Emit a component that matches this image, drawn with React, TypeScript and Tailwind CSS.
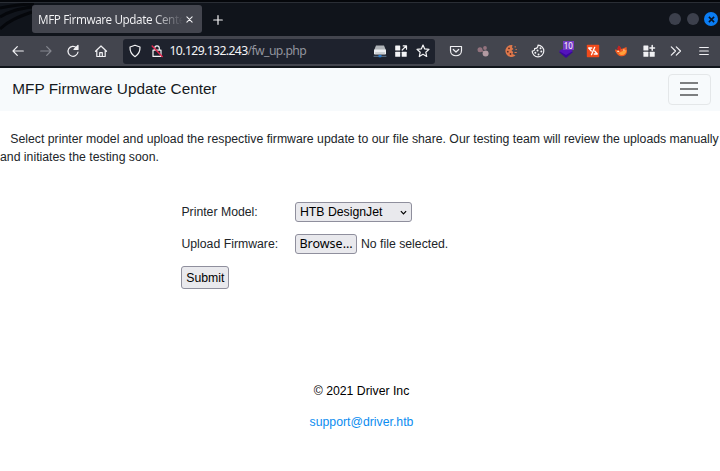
import React from "react";

const stroke = {
  fill: "none",
  stroke: "currentColor",
  strokeWidth: 1.2,
  strokeLinecap: "round" as const,
  strokeLinejoin: "round" as const,
};

function Icon({ children, className = "" }: { children: React.ReactNode; className?: string }) {
  return (
    <svg viewBox="0 0 14 14" className={"size-[14px] shrink-0 " + className} {...stroke}>
      {children}
    </svg>
  );
}

function TitleBar() {
  return (
    <header className="relative flex h-9 items-start overflow-hidden border-t-2 border-[#05070b] bg-[#10141b] pl-8">
      <svg className="absolute left-0 top-0 h-[34px] w-[120px]" viewBox="0 0 120 34" fill="none" stroke="#05070b" strokeWidth="3">
        <path d="M0 15C10 9 18 7 32 5M0 27C8 19 18 15 32 10M0 6C10 4 20 2 34 2" />
      </svg>
      <div className="absolute left-0 top-0 h-px w-full bg-[#2a2e35]" />
      <div className="relative mt-[3px] flex h-7 w-[170px] items-center rounded-[3px] bg-[#43454e] pl-1.5 text-[#f4f4f6]">
        <div className="w-[145px] whitespace-nowrap bg-linear-to-r from-[#f4f4f6] from-80% to-[#43454e] bg-clip-text font-['Noto_Sans',sans-serif] text-[11.7px] leading-[16px] tracking-[-0.4px] text-transparent">
          MFP Firmware Update Cente
        </div>
        <svg viewBox="0 0 8 8" className="ml-[3px] size-[7px]" {...stroke}>
          <path d="M1 1l6 6M7 1L1 7" />
        </svg>
      </div>
      <svg viewBox="0 0 10 10" className="ml-[11px] mt-[13px] size-[10px] text-[#f4f4f6]" {...stroke}>
        <path d="M5 .7v8.6M.7 5h8.6" />
      </svg>
      <div className="ml-auto mr-[2px] mt-[11px] flex gap-[6px]">
        <span className="size-3 rounded-full bg-[#3c404c]" />
        <span className="size-3 rounded-full bg-[#3c404c]" />
        <span className="-ml-px -mt-px flex size-[14px] items-center justify-center rounded-full bg-[#0a7df4]">
          <svg viewBox="0 0 8 8" className="size-[7px]" stroke="#071426" strokeWidth="1.8">
            <path d="M1 1l6 6M7 1L1 7" />
          </svg>
        </span>
      </div>
    </header>
  );
}

function AddressBar() {
  return (
    <div className="ml-[15px] flex h-[25px] w-[312px] items-center rounded-[3px] bg-[#1e222d] pl-[5px] text-[#f4f4f6]">
      <Icon>
        <path d="M7 1.200l5 1.800c.2 4.300-1 7.200-5 9.700C3 10.200 1.800 7.300 2 3z" />
      </Icon>
      <Icon className="ml-[8px]">
        <path d="M4.700 6V4.200c0-3.200 4.600-3.200 4.600 0V6M3 6.200h8v6.200H3z" />
        <path d="M2.200 2l10 10.500" stroke="#e22850" strokeWidth="1.500" />
      </Icon>
      <span className="ml-[6px] font-['Noto_Sans',sans-serif] text-[12.2px] leading-4 tracking-[-0.6px]">
        10.129.132.243<span className="text-[#92949d]">/fw_up.php</span>
      </span>
      <div className="ml-auto mr-[5px] flex items-center gap-[7.500px]">
        <Icon>
          <path d="M3 1.500h8l2 5H1z" fill="#aeb2b6" stroke="none" />
          <rect x="1" y="5.500" width="12" height="5" rx=".7" fill="#eceef0" stroke="none" />
          <path d="M2.500 9h9" stroke="#9aa0a5" strokeWidth=".8" />
          <path d="M1 12.300h12M7 11v2" stroke="#68829a" strokeWidth=".9" />
          <rect x="5.500" y="11" width="3" height="2.200" fill="#2a79c9" stroke="none" />
        </Icon>
        <Icon>
          <g fill="currentColor" stroke="none">
            <rect x="1.200" y="1.500" width="5" height="5" rx=".5" />
            <rect x="1.200" y="7.700" width="5" height="5" rx=".5" />
            <rect x="7.700" y="7.700" width="5" height="5" rx=".5" />
          </g>
          <path d="M8.200 6l3.800-3.800M9.200 1.900h3.300v3.300" />
        </Icon>
        <Icon>
          <path d="M7 1l1.700 3.900 4.300.4-3.200 2.900.9 4.300L7 10.300l-3.700 2.200.9-4.300L1 5.300l4.300-.4z" />
        </Icon>
      </div>
    </div>
  );
}

function Toolbar() {
  return (
    <div className="flex h-[30px] items-center bg-[#43454e] pl-[11px] text-[#f1f1f4]">
      <div className="flex items-center gap-[13.500px]">
        <Icon>
          <path d="M12.300 7H2M6.300 2.700L2 7l4.300 4.300" />
        </Icon>
        <Icon className="text-[#85878f]">
          <path d="M1.700 7H12M7.700 2.700L12 7l-4.300 4.300" />
        </Icon>
        <Icon>
          <path d="M10.500 3.700A5 5 0 1 0 12 8" />
          <path d="M12 1.500v4H8z" fill="currentColor" />
        </Icon>
        <Icon>
          <path d="M1.500 7.300L7 2l5.500 5.300M2.800 6.500v6h8.400v-6M5.700 12.300V8.700h2.600v3.600" />
        </Icon>
      </div>
      <AddressBar />
      <div className="ml-[14px] flex items-center gap-[13.600px]">
        <Icon>
          <path d="M1.500 2.500h11v4c0 7-11 7-11 0zM4.300 5.500L7 8l2.700-2.500" />
        </Icon>
        <Icon>
          <g stroke="none" fill="#93737e">
            <circle cx="4" cy="5.800" r="2.500" />
            <circle cx="9" cy="4" r="1.900" />
            <path d="M4 5l5 4" stroke="#93737e" strokeWidth="1.500" />
            <circle cx="9.600" cy="9.400" r="3" fill="#b29aa2" />
          </g>
        </Icon>
        <Icon>
          <path d="M8.500 1A6 6 0 1 0 11.500 11.300L8.500 10l.7-2L7.500 6.500 9.500 5 8 3.500z" fill="#df784b" stroke="none" />
          <g fill="#592e26" stroke="none">
            <circle cx="5" cy="4.300" r=".9" />
            <circle cx="3.800" cy="7.700" r=".9" />
            <circle cx="6.500" cy="10" r=".9" />
          </g>
          <path d="M11 2.800h.4M12 5.500h.3M11 8.500h1.300" stroke="#df784b" />
        </Icon>
        <Icon>
          <path d="M7 1.200A5.800 5.800 0 1 1 1.200 7C3 7.200 4 6 3.600 4.500 6 4.500 7 3 7 1.200z" />
          <path d="M9.500 4.200h.1M6.500 6.500h.1M10.300 7.500h.1M4.300 8.800h.1M7.500 10.500h.1" strokeWidth="1.900" />
        </Icon>
        <div className="relative size-[14px]">
          <Icon>
            <path d="M0 8l7-4 7 4-7 6z" fill="#3a089b" stroke="none" />
            <path d="M0 7l7-4 7 4-7 4z" fill="#5413bd" stroke="none" />
          </Icon>
          <span className="absolute -top-[3px] left-[4px] flex h-[9px] w-[11px] items-center justify-center bg-[#743bc3] font-['Noto_Sans',sans-serif] text-[8px] leading-none text-white">
            10
          </span>
        </div>
        <Icon>
          <rect x=".8" y=".8" width="12.400" height="12.400" rx=".7" fill="#f04a1b" stroke="none" />
          <path d="M5.800 4H2.700l2.600 3M8.700 3.300l-3.200 7.400M8.700 7l2.600 3H8.200" stroke="white" strokeWidth="1.300" />
        </Icon>
        <Icon>
          <path d="M1 5.500l3 .5 1-4 2.500 3L12.500 3l.5 5c-1 6-10 6-12-2z" fill="#ee5b22" stroke="none" />
          <path d="M4.500 1.500L7 3.500 6 7 3 5z" fill="#c52322" stroke="none" />
          <path d="M4 8.500c2 1 4-2 8.500-2.500-.5 6-6 6.500-8.500 2.500z" fill="#ffa03a" stroke="none" />
          <path d="M3.700 7.300h1M9.500 6h.7" stroke="#ffe2c4" />
        </Icon>
        <Icon>
          <g fill="currentColor" stroke="none">
            <rect x="1.400" y="1.400" width="5" height="5" rx=".5" />
            <rect x="1.400" y="7.700" width="5" height="5" rx=".5" />
            <rect x="7.700" y="7.700" width="5" height="5" rx=".5" />
          </g>
          <path d="M10.200 1.600v4.600M7.900 3.900h4.600" strokeWidth="1.500" />
        </Icon>
        <Icon>
          <path d="M2.300 2.800L6.500 7l-4.200 4.200M7.300 2.800L11.500 7l-4.200 4.200" />
        </Icon>
        <Icon>
          <path d="M2.700 3.500h8.600M2.700 7h8.600M2.700 10.500h8.600" />
        </Icon>
      </div>
    </div>
  );
}

export default function App() {
  return (
    <div className="h-[471px] w-[720px] overflow-hidden bg-white font-['Liberation_Sans',Arial,sans-serif] text-[12.280px] leading-[18.400px] text-[#212529]">
      <TitleBar />
      <Toolbar />
      <div className="h-[1.500px] bg-[#11151b]" />
      <nav className="flex h-[43px] items-center justify-between bg-[#f7fafc] pl-[12.300px] pr-[9.500px]">
        <span className="text-[15.350px] text-[#15191c]">MFP Firmware Update Center</span>
        <button className="flex h-[31px] w-[43px] flex-col items-center justify-center gap-[4.500px] rounded-[4px] border border-[#e4e7e9]">
          <span className="h-[1.500px] w-[18px] bg-[#7c7e80]" />
          <span className="h-[1.500px] w-[18px] bg-[#7c7e80]" />
          <span className="h-[1.500px] w-[18px] bg-[#7c7e80]" />
        </button>
      </nav>
      <main>
        <p className="mt-[19px] whitespace-nowrap indent-[10.300px]">
          Select printer model and upload the respective firmware update to our file share. Our testing team will review the uploads manually
        </p>
        <p>and initiates the testing soon.</p>
        <form className="ml-[181.400px] mt-[36px] grid grid-cols-[113.600px_1fr] items-center gap-y-3">
          <label>Printer Model:</label>
          <div className="flex h-5 w-[117px] items-center justify-between rounded-[3px] border border-[#8f8f9d] bg-[#e9e9ed] pl-[4px] pr-[4px] text-black">
            HTB DesignJet
            <svg viewBox="0 0 8 8" className="size-[7px]" fill="none" stroke="black" strokeWidth="1.400">
              <path d="M1 2.500l3 3 3-3" />
            </svg>
          </div>
          <label>Upload Firmware:</label>
          <div className="flex items-center">
            <button type="button" className="h-5 w-[62px] rounded-[3px] border border-[#8f8f9d] bg-[#e9e9ed] text-center font-['Noto_Sans',sans-serif] text-[12.500px] leading-[18px] text-black">
              Browse…
            </button>
            <span className="ml-[4px]">No file selected.</span>
          </div>
          <button type="button" className="h-[23px] w-12 rounded-[3px] border border-[#8f8f9d] bg-[#e9e9ed] leading-[20px] text-black">
            Submit
          </button>
        </form>
      </main>
      <footer className="mt-[93px] flex flex-col items-center gap-3 pl-[3px] text-black">
        <span>© 2021 Driver Inc</span>
        <a className="text-[#0b8df0]">support@driver.htb</a>
      </footer>
    </div>
  );
}
